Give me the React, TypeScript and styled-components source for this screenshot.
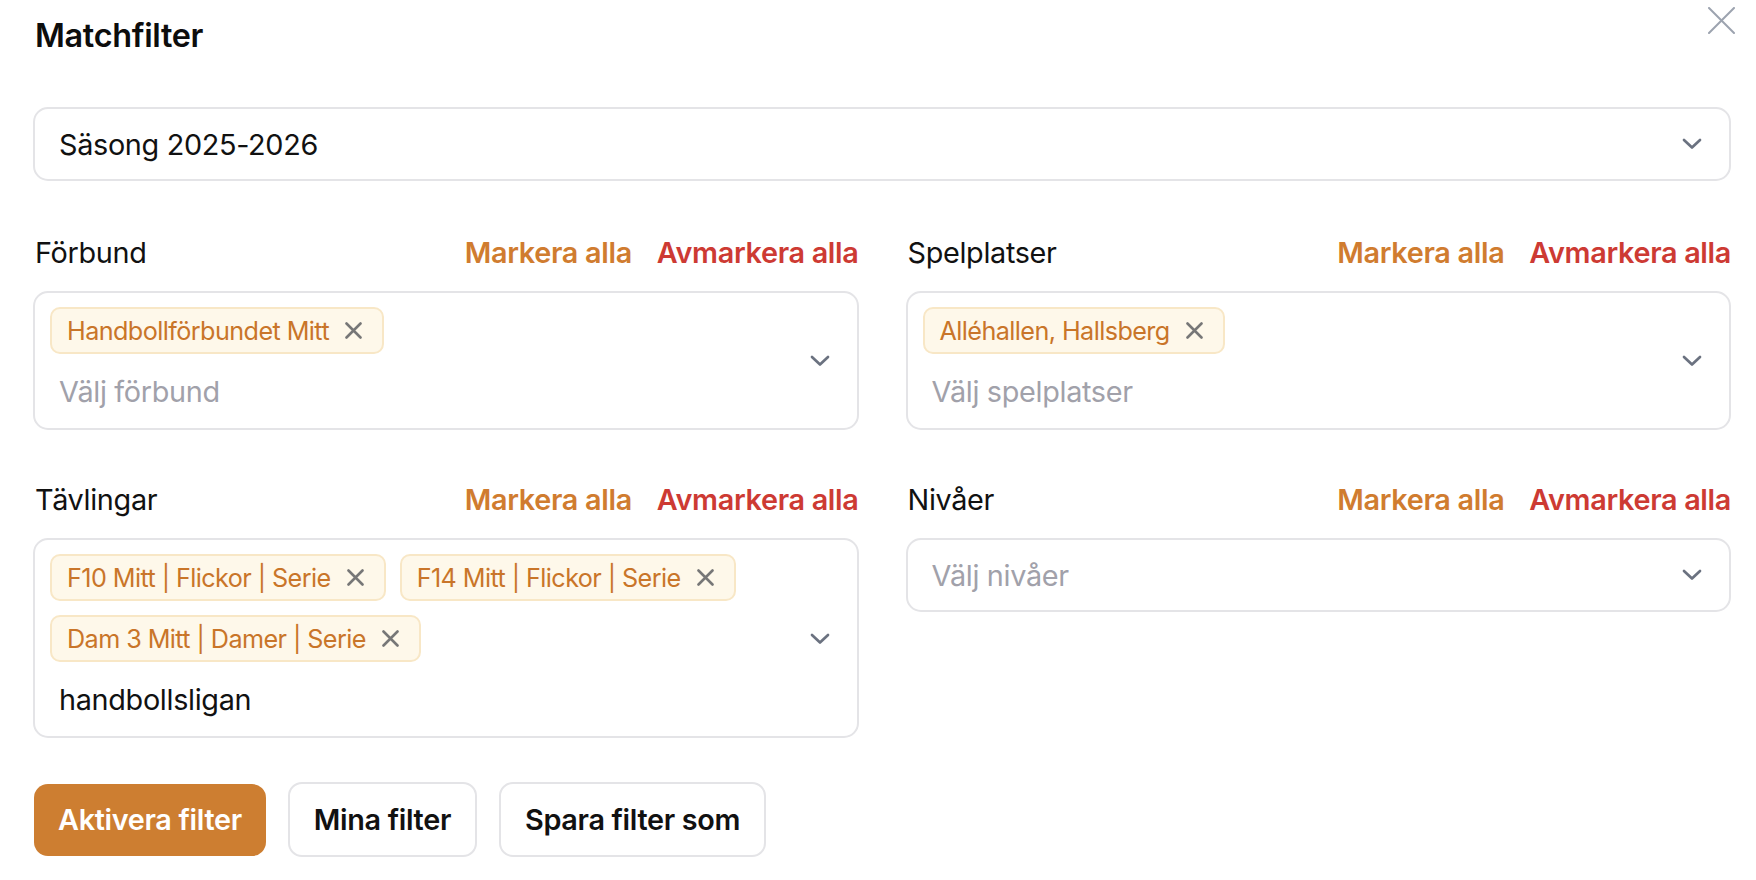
import React from "react";
import styled, { createGlobalStyle } from "styled-components";

const GlobalStyle = createGlobalStyle`
  html, body { margin: 0; padding: 0; background: #ffffff; }
  body { font-family: Inter, "Noto Sans", "Liberation Sans", sans-serif; color: #111111; }
  * { box-sizing: border-box; }
  button { letter-spacing: inherit; }
`;

const Page = styled.div`
  position: relative;
  padding: 16px 25px 40px 33px;
  letter-spacing: -0.02em;
`;

const CloseButton = styled.button`
  position: absolute;
  top: 6px;
  right: 20px;
  width: 29px;
  height: 29px;
  padding: 1px;
  border: none;
  background: transparent;
  cursor: pointer;
  display: flex;
`;

const Title = styled.h1`
  margin: 0;
  padding-left: 2px;
  font-size: 32.4px;
  line-height: 40px;
  font-weight: 600;
  color: #0d0d0d;
`;

const SingleSelect = styled.div`
  height: 74px;
  border: 2px solid #e4e4e7;
  border-radius: 15px;
  padding: 0 27px 0 24px;
  display: flex;
  align-items: center;
  justify-content: space-between;
  background: #fff;
`;

const SeasonSelect = styled(SingleSelect)`
  margin-top: 51px;
`;

const SelectText = styled.span<{ $placeholder?: boolean }>`
  font-size: 28.8px;
  line-height: 43px;
  color: ${(p) => (p.$placeholder ? "#a1a1aa" : "#111111")};
`;

const Grid = styled.div`
  margin-top: 50px;
  display: grid;
  grid-template-columns: 1fr 1fr;
  column-gap: 47px;
  row-gap: 48px;
  align-items: start;
`;

const Field = styled.div`
  display: flex;
  flex-direction: column;
  gap: 17px;
`;

const LabelRow = styled.div`
  display: flex;
  align-items: center;
  justify-content: space-between;
  height: 43px;
  padding-left: 2px;
`;

const Label = styled.span`
  font-size: 28.8px;
  line-height: 43px;
  color: #111111;
`;

const Links = styled.div`
  display: flex;
  gap: 25px;
`;

const LinkButton = styled.button<{ $tone: "orange" | "red" }>`
  border: none;
  background: none;
  padding: 0;
  font-family: inherit;
  font-size: 28.8px;
  line-height: 43px;
  font-weight: 600;
  cursor: pointer;
  color: ${(p) => (p.$tone === "orange" ? "#d07c2f" : "#cd3a33")};
`;

const MultiBox = styled.div`
  border: 2px solid #e4e4e7;
  border-radius: 15px;
  padding: 14px 27px 13px 15px;
  display: flex;
  align-items: center;
  gap: 16px;
  background: #fff;
`;

const MultiContent = styled.div`
  flex: 1;
  display: flex;
  flex-direction: column;
  gap: 14px;
`;

const Chips = styled.div`
  display: flex;
  flex-wrap: wrap;
  gap: 14px;
`;

const Chip = styled.span`
  display: inline-flex;
  align-items: center;
  height: 47px;
  padding: 0 20px 0 15px;
  border: 2px solid #f8e7c6;
  background: #fef8ea;
  border-radius: 10px;
  font-size: 25.2px;
  letter-spacing: -0.023em;
  color: #c97529;
  white-space: nowrap;
`;

const ChipRemove = styled.span`
  display: inline-flex;
  margin-left: 16px;
`;

const InputLine = styled.div<{ $placeholder?: boolean }>`
  padding-left: 9px;
  font-size: 28.8px;
  line-height: 47px;
  color: ${(p) => (p.$placeholder ? "#a1a1aa" : "#111111")};
`;

const Actions = styled.div`
  margin-top: 44px;
  display: flex;
  align-items: center;
  gap: 22px;
  padding-left: 1px;
`;

const Button = styled.button<{ $primary?: boolean }>`
  height: ${(p) => (p.$primary ? "72px" : "75px")};
  padding: 0 24px;
  border-radius: 14px;
  font-family: inherit;
  font-size: 28.8px;
  font-weight: 600;
  cursor: pointer;
  border: ${(p) => (p.$primary ? "none" : "2px solid #e4e4e7")};
  background: ${(p) => (p.$primary ? "#cd7e31" : "#ffffff")};
  color: ${(p) => (p.$primary ? "#ffffff" : "#111111")};
`;

const Chevron = () => (
  <svg width="20" height="12" viewBox="0 0 20 12" fill="none">
    <path d="M2 2 L10 9.5 L18 2" stroke="#6b7280" strokeWidth="2.7" strokeLinecap="round" strokeLinejoin="round" />
  </svg>
);

const SmallX = () => (
  <svg width="17" height="17" viewBox="0 0 17 17" fill="none">
    <path d="M1.5 1.5 L15.5 15.5 M15.5 1.5 L1.5 15.5" stroke="#777777" strokeWidth="2.6" strokeLinecap="round" />
  </svg>
);

const BigX = () => (
  <svg width="27" height="27" viewBox="0 0 27 27" fill="none">
    <path d="M1 1 L26 26 M26 1 L1 26" stroke="#9ca3af" strokeWidth="2" strokeLinecap="round" />
  </svg>
);

type FieldProps = {
  label: string;
  chips: string[];
  placeholder: string;
  value?: string;
};

const MultiField = ({ label, chips, placeholder, value }: FieldProps) => (
  <Field>
    <LabelRow>
      <Label>{label}</Label>
      <Links>
        <LinkButton $tone="orange">Markera alla</LinkButton>
        <LinkButton $tone="red">Avmarkera alla</LinkButton>
      </Links>
    </LabelRow>
    {chips.length > 0 ? (
      <MultiBox>
        <MultiContent>
          <Chips>
            {chips.map((c) => (
              <Chip key={c}>
                {c}
                <ChipRemove>
                  <SmallX />
                </ChipRemove>
              </Chip>
            ))}
          </Chips>
          <InputLine $placeholder={!value}>{value || placeholder}</InputLine>
        </MultiContent>
        <Chevron />
      </MultiBox>
    ) : (
      <SingleSelect>
        <SelectText $placeholder>{placeholder}</SelectText>
        <Chevron />
      </SingleSelect>
    )}
  </Field>
);

export default function App() {
  return (
    <Page>
      <GlobalStyle />
      <CloseButton aria-label="Stäng">
        <BigX />
      </CloseButton>
      <Title>Matchfilter</Title>
      <SeasonSelect>
        <SelectText>Säsong 2025-2026</SelectText>
        <Chevron />
      </SeasonSelect>
      <Grid>
        <MultiField label="Förbund" chips={["Handbollförbundet Mitt"]} placeholder="Välj förbund" />
        <MultiField label="Spelplatser" chips={["Alléhallen, Hallsberg"]} placeholder="Välj spelplatser" />
        <MultiField
          label="Tävlingar"
          chips={["F10 Mitt | Flickor | Serie", "F14 Mitt | Flickor | Serie", "Dam 3 Mitt | Damer | Serie"]}
          placeholder="Välj tävlingar"
          value="handbollsligan"
        />
        <MultiField label="Nivåer" chips={[]} placeholder="Välj nivåer" />
      </Grid>
      <Actions>
        <Button $primary>Aktivera filter</Button>
        <Button>Mina filter</Button>
        <Button>Spara filter som</Button>
      </Actions>
    </Page>
  );
}
